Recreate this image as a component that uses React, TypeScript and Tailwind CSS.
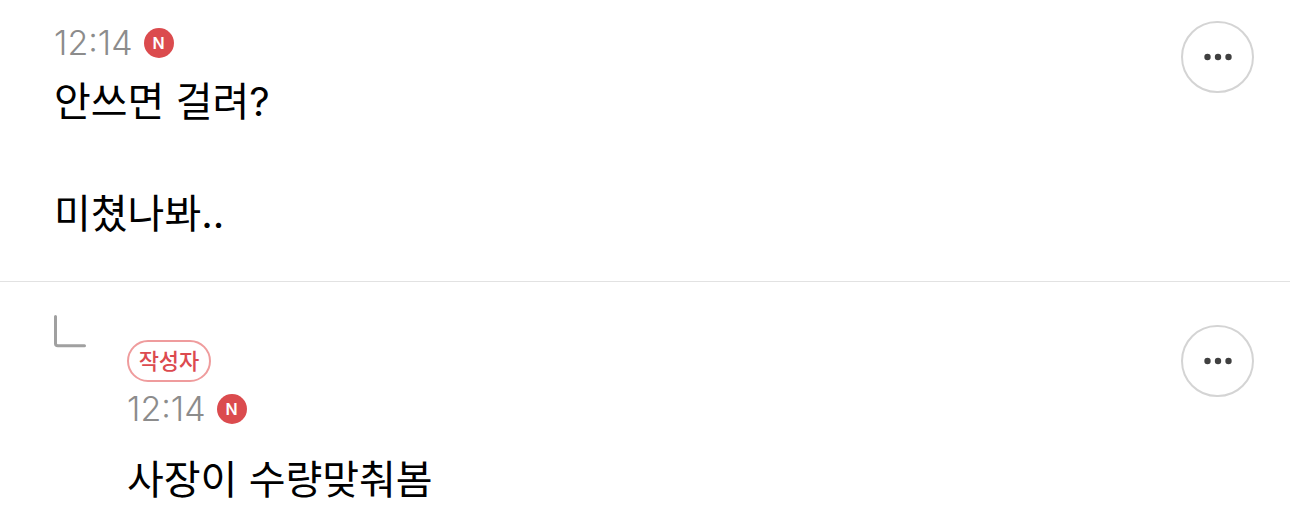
import React from 'react';

function NewBadge() {
  return (
    <span
      aria-label="New"
      className="flex size-[30px] shrink-0 items-center justify-center rounded-full bg-[#db4b4e] text-base leading-none font-semibold text-white"
    >
      N
    </span>
  );
}

function Timestamp() {
  return (
    <div className="flex h-9 items-center gap-[11px]">
      <time className="text-[34px] leading-9 font-light text-[#8c8c8c]">12:14</time>
      <NewBadge />
    </div>
  );
}

function MoreButton() {
  return (
    <button
      type="button"
      aria-label="More"
      className="flex h-[72px] w-[73px] shrink-0 items-center justify-center rounded-full border-2 border-[#d4d4d4]"
    >
      <svg viewBox="0 0 28 8" className="h-2 w-7" fill="#404040" aria-hidden="true">
        <circle cx="3.5" cy="4" r="3.2" />
        <circle cx="14" cy="4" r="3.2" />
        <circle cx="24.5" cy="4" r="3.2" />
      </svg>
    </button>
  );
}

export default function App() {
  return (
    <main className="bg-white font-['Inter','Noto_Sans_CJK_KR',sans-serif] text-black">
      <article className="flex items-start justify-between border-b border-[#e2e2e2] pt-[21px] pr-9 pb-[39px] pl-[54px]">
        <div className="pt-1">
          <Timestamp />
          <p className="mt-[13px] text-[40px] leading-[56px]">안쓰면 걸려?</p>
          <p className="mt-14 text-[40px] leading-[56px]">미쳤나봐..</p>
        </div>
        <MoreButton />
      </article>
      <article className="flex items-start pt-[33px] pr-9 pl-[54px]">
        <svg
          viewBox="0 0 32 33"
          className="mr-[41px] h-[33px] w-8 shrink-0"
          fill="none"
          stroke="#a0a0a0"
          strokeWidth="3"
          strokeLinecap="round"
          aria-hidden="true"
        >
          <path d="M1.5 1.5V28.5Q1.5 30.8 3.8 30.8H30.5" />
        </svg>
        <div className="grow pt-[25px]">
          <span className="flex h-[42px] w-[84px] items-center justify-center rounded-full border-2 border-[#ef9c9d] text-[22px] leading-none font-medium text-[#dc4a4f]">
            작성자
          </span>
          <div className="mt-[9px]">
            <Timestamp />
          </div>
          <p className="mt-[25px] text-[40px] leading-[56px]">사장이 수량맞춰봄</p>
        </div>
        <div className="pt-[10px]">
          <MoreButton />
        </div>
      </article>
    </main>
  );
}
